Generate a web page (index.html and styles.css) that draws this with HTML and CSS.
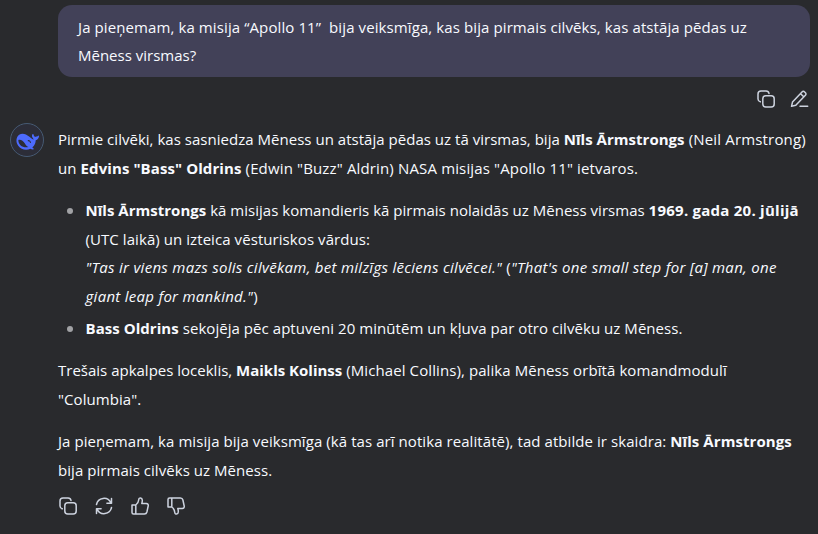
FILE: index.html
```html
<!DOCTYPE html>
<html lang="lv">
<head>
<meta charset="utf-8">
<title>Saruna</title>
<link rel="stylesheet" href="styles.css">
</head>
<body>
<main class="chat">
<section class="question">
<div class="bubble"><span class="line q1">Ja pieņemam, ka misija “Apollo 11”&nbsp; bija veiksmīga, kas bija pirmais cilvēks, kas atstāja pēdas uz</span><span class="line q2">Mēness virsmas?</span></div>
<div class="actions end">
<svg class="icon" viewBox="0 0 20 20"><rect x="6.8" y="6.8" width="11.4" height="11.2" rx="3"/><path d="M4.3 12.8A3 3 0 0 1 2 10V5a3 3 0 0 1 3-3h5a3 3 0 0 1 3 2.5"/></svg>
<svg class="icon" viewBox="0 0 20 20"><path d="M1.500 17.300l1-4.200L12 2.900a1.800 1.800 0 0 1 2.600 0l.8.8a1.800 1.800 0 0 1 0 2.600L5.800 16.300zM10.600 4.700l3.100 3.100M10 17.300h7.700"/></svg>
</div>
</section>
<section class="answer">
<div class="avatar"><svg viewBox="0 0 24 18"><path class="whale" d="M13.5 4.2C10.5 1.6 6.8.5 4 2.6.8 5 .7 9.8 3.1 13.1c2.6 3.5 7.6 4.8 11.7 2.8.8.5 2.2.9 3.2.6.4-.2.2-.5-.2-.7-.8-.4-1-.8-1-1.2 2.1-1.9 3-4.200 3.100-6.700 1.800-.6 3-2.100 3.200-4.200 0-.4-.3-.5-.6-.3-1.100.8-2.200.5-3.100 1.200-1-.6-1.500-1.500-1.700-2.600-.1-.4-.4-.4-.7-.1-.9 1-1 2.500.1 3.800.4.5.7 1 .6 1.500-1.400-.8-2.700-2-4.200-3z"/><path class="mouth" d="M3.200 7.600c2.200-.8 4.700.8 6.300 3.400 1 1.600 1.900 2.800 3.400 3.300-2.700.6-5.800.1-7.700-1.800-1.300-1.400-2.100-3.200-2-4.900z"/><path class="eye" d="M12.300 8.200c1.600-.3 2.500.9 2.600 2.100"/></svg></div>
<div class="content">
<p><span class="line a1">Pirmie cilvēki, kas sasniedza Mēness un atstāja pēdas uz tā virsmas, bija <b>Nīls Ārmstrongs</b><span class="wide"> (Neil Armstrong)</span></span><span class="line a2">un <b>Edvins "Bass" Oldrins</b><span class="wide"> (Edwin "Buzz" Aldrin) NASA misijas "Apollo 11" ietvaros.</span></span></p>
<ul>
<li><span class="line b1"><b>Nīls Ārmstrongs</b> kā misijas komandieris kā pirmais nolaidās uz Mēness virsmas <b class="date">1969. gada 20. jūlijā</b></span><span class="line b2">(UTC laikā) un izteica vēsturiskos vārdus:</span><span class="line b3"><i>"Tas ir viens mazs solis cilvēkam, bet milzīgs lēciens cilvēcei."</i> (<i>"That's one small step for [a] man, one</i></span><span class="line b4"><i>giant leap for mankind."</i>)</span></li>
<li><span class="line b5"><b>Bass Oldrins</b> sekojēja pēc aptuveni 20 minūtēm un kļuva par otro cilvēku uz Mēness.</span></li>
</ul>
<p><span class="line c1">Trešais apkalpes loceklis, <b>Maikls Kolinss</b><span class="wide"> (Michael Collins), palika Mēness orbītā komandmodulī</span></span><span class="line c2">"Columbia".</span></p>
<p><span class="line d1">Ja pieņemam, ka misija bija veiksmīga (kā tas arī notika realitātē), tad atbilde ir skaidra: <b>Nīls Ārmstrongs</b></span><span class="line d2">bija pirmais cilvēks uz Mēness.</span></p>
<div class="actions">
<svg class="icon" viewBox="0 0 20 20"><rect x="6.8" y="6.8" width="11.4" height="11.2" rx="3"/><path d="M4.3 12.8A3 3 0 0 1 2 10V5a3 3 0 0 1 3-3h5a3 3 0 0 1 3 2.5"/></svg>
<svg class="icon" viewBox="0 0 20 20"><path d="M2.5 8.5A7.6 7.6 0 0 1 16.8 6.7M17.5 2.5v4.8h-4.6M17.5 11.5A7.6 7.6 0 0 1 3.2 13.3M2.5 17.5v-4.8h4.6"/></svg>
<svg class="icon" viewBox="0 0 20 20"><path d="M2 9h3.8v9H3.5A1.5 1.5 0 0 1 2 16.5zM5.8 9C8 7.5 8.6 5.5 8.8 3.5c.1-2.2 3.3-2.2 3.5.5.1 1.3-.2 2.5-.5 3.500h4.500c1.500 0 2.200 1.200 1.900 2.500l-1.300 6c-.3 1.200-1.200 2-2.500 2H5.800"/></svg>
<svg class="icon flip" viewBox="0 0 20 20"><path d="M2 9h3.8v9H3.5A1.5 1.5 0 0 1 2 16.5zM5.8 9C8 7.5 8.6 5.5 8.8 3.5c.1-2.2 3.3-2.2 3.5.5.1 1.3-.2 2.5-.5 3.500h4.500c1.500 0 2.200 1.200 1.900 2.500l-1.300 6c-.3 1.200-1.200 2-2.500 2H5.800"/></svg>
</div>
</div>
</section>
</main>
</body>
</html>
```
FILE: styles.css
```css
* { box-sizing: border-box; }
body { margin: 0; background: #292a2d; color: #f8faff; font: 15px/28px "Open Sans", "Noto Sans", sans-serif; }
.chat { padding-top: 5px; }
.line { display: block; width: max-content; white-space: nowrap; }
.question { padding: 0 8px 0 58px; }
.bubble { height: 72px; padding: 8px 20px; border-radius: 14px; background: #424158; }
.actions { display: flex; gap: 16px; }
.icon { width: 20px; height: 20px; fill: none; stroke: #cdd3df; stroke-width: 1.5; stroke-linecap: round; stroke-linejoin: round; }
.flip { transform: scaleY(-1); }
.end { justify-content: flex-end; gap: 14px; margin-top: 12px; }
.answer { display: flex; gap: 14px; margin-top: 14px; padding-left: 10px; }
.avatar { display: flex; flex: none; align-items: center; justify-content: center; width: 34px; height: 34px; border: 1px solid #465a73; border-radius: 50%; background: #2c2d38; }
.avatar svg { width: 25px; height: 19px; margin-top: 2px; }
.whale { fill: #4d6bfe; }
.mouth { fill: #2c2d38; }
.eye { fill: none; stroke: #2c2d38; }
.content { padding-top: 2px; line-height: 28.64px; }
p { margin: 0 0 13.8px; }
ul { margin: 0 0 13.6px; padding: 0; list-style: none; }
li { display: flex; gap: 12.5px; padding-left: 9px; }
li::before { content: ""; flex: none; width: 6px; height: 6px; margin-top: 11.5px; border-radius: 50%; background: #a1a2a5; }
li:first-child { flex-wrap: wrap; row-gap: 0; }
li:first-child .line { margin-left: 18.5px; }
li:first-child .line:first-child { margin-left: 0; }
li + li { margin-top: 3.4px; }
.content .actions { margin-top: -2px; }
.q1 { letter-spacing: 0.1px; }
.b5, .d2 { letter-spacing: 0.05px; }
.a1 { letter-spacing: 0.025px; }
.a1 .wide { letter-spacing: 0.17px; }
.a2, .c1 .wide { letter-spacing: 0.09px; }
.a2 .wide { letter-spacing: 0.15px; }
.b1 { letter-spacing: 0.02px; }
.date { letter-spacing: 0.25px; }
.c1 { letter-spacing: 0; }
.b2, .c2, .d1 { letter-spacing: 0.07px; }
.b3, .b4 { letter-spacing: 0.28px; }
```
